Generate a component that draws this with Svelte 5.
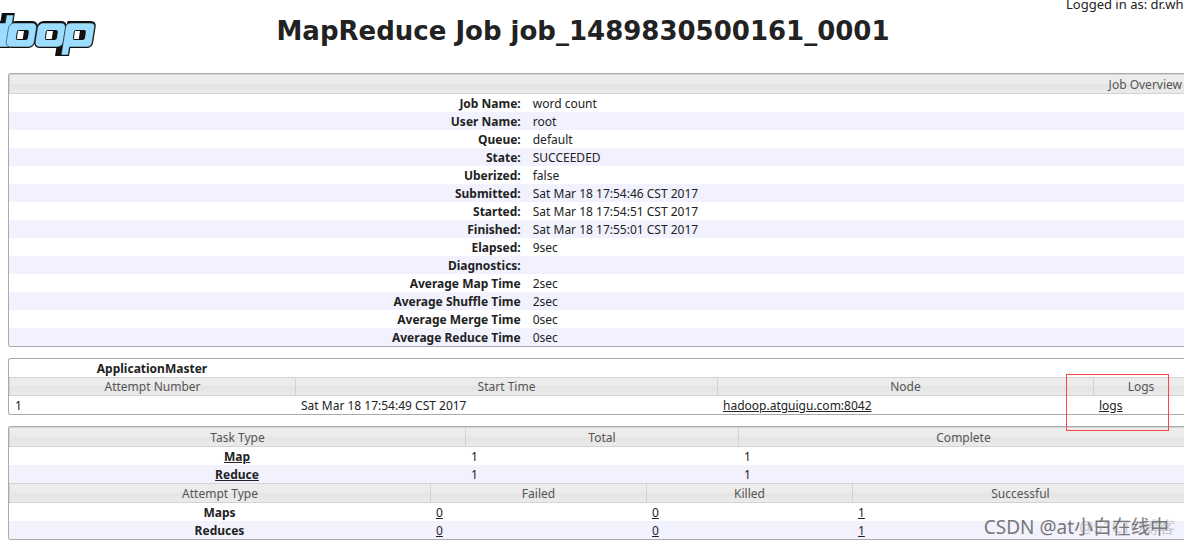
<script>
    const overview = [
        ["Job Name:", "word count"],
        ["User Name:", "root"],
        ["Queue:", "default"],
        ["State:", "SUCCEEDED"],
        ["Uberized:", "false"],
        ["Submitted:", "Sat Mar 18 17:54:46 CST 2017"],
        ["Started:", "Sat Mar 18 17:54:51 CST 2017"],
        ["Finished:", "Sat Mar 18 17:55:01 CST 2017"],
        ["Elapsed:", "9sec"],
        ["Diagnostics:", ""],
        ["Average Map Time", "2sec"],
        ["Average Shuffle Time", "2sec"],
        ["Average Merge Time", "0sec"],
        ["Average Reduce Time", "0sec"]
    ];

    const tasks = [
        { type: "Map", total: 1, complete: 1 },
        { type: "Reduce", total: 1, complete: 1 }
    ];

    const attempts = [
        { type: "Maps", counts: [0, 0, 1] },
        { type: "Reduces", counts: [0, 0, 1] }
    ];

    // relative column widths, the fixed table layout scales them to the panel
    const overview_cols = [516, 659];
    const master_cols = [286, 422, 376, 95];
    const task_cols = [456, 273, 450];
    const attempt_cols = [421, 216, 206, 336];
</script>

{#snippet columns(widths)}
    <colgroup>
        {#each widths as width}
            <col style:width={`${width}px`} />
        {/each}
    </colgroup>
{/snippet}

<div class="page">
    <header>
        <svg class="logo" viewBox="0 0 100 48" role="img" aria-label="hadoop">
            <g transform="translate(2 0) skewX(-9)">
                <g class="shadow">
                    <path d="M1 2H12V35H-6V10H1Z" />
                    <rect x="10" y="10" width="27" height="25" rx="5" />
                    <rect x="38" y="10" width="28" height="25" rx="5" />
                    <path d="M68 10H90Q95 10 95 15V30Q95 35 90 35H73V43H61V35H64Z" />
                </g>
                <g class="face">
                    <path d="M5 3H12V35H-6V11H5Z" />
                    <rect x="9" y="11" width="28" height="24" rx="5" />
                    <rect x="38" y="11" width="28" height="24" rx="5" />
                    <path d="M71 11H90Q95 11 95 15V30Q95 35 90 35H73V43H66V15Q66 11 71 11Z" />
                </g>
                <g class="hole">
                    <rect x="18" y="18" width="12" height="10" rx="2" />
                    <rect x="47" y="18" width="12" height="10" rx="2" />
                    <rect x="75" y="18" width="12" height="10" rx="2" />
                </g>
                <path class="gap" d="M19 19H25V27H19ZM48 19H54V27H48ZM76 19H81V27H76Z" />
            </g>
        </svg>
        <h1>MapReduce Job job_1489830500161_0001</h1>
        <div class="user">Logged in as: dr.who</div>
    </header>

    <main>
        <div class="panel">
            <table class="overview striped">
                {@render columns(overview_cols)}
                <thead>
                    <tr class="bar"><th colspan="2">Job Overview</th></tr>
                </thead>
                <tbody>
                    {#each overview as [name, value]}
                        <tr>
                            <th scope="row">{name}</th>
                            <td>{value}</td>
                        </tr>
                    {/each}
                </tbody>
            </table>
        </div>

        <div class="panel master">
            <table>
                {@render columns(master_cols)}
                <tbody>
                    <tr><th>ApplicationMaster</th><td colspan="3"></td></tr>
                    <tr class="bar">
                        <th>Attempt Number</th>
                        <th>Start Time</th>
                        <th>Node</th>
                        <th>Logs</th>
                    </tr>
                    <tr>
                        <td>1</td>
                        <td>Sat Mar 18 17:54:49 CST 2017</td>
                        <td><a href="#node">hadoop.atguigu.com:8042</a></td>
                        <td class="marked"><a href="#logs">logs</a></td>
                    </tr>
                </tbody>
            </table>
        </div>

        <div class="panel">
            <table class="striped">
                {@render columns(task_cols)}
                <thead>
                    <tr class="bar"><th>Task Type</th><th>Total</th><th>Complete</th></tr>
                </thead>
                <tbody>
                    {#each tasks as task}
                        <tr>
                            <th scope="row"><a href="#{task.type}">{task.type}</a></th>
                            <td>{task.total}</td>
                            <td>{task.complete}</td>
                        </tr>
                    {/each}
                </tbody>
            </table>
            <table class="striped">
                {@render columns(attempt_cols)}
                <thead>
                    <tr class="bar">
                        <th>Attempt Type</th>
                        <th>Failed</th>
                        <th>Killed</th>
                        <th>Successful</th>
                    </tr>
                </thead>
                <tbody>
                    {#each attempts as attempt}
                        <tr>
                            <th scope="row">{attempt.type}</th>
                            {#each attempt.counts as count}
                                <td><a href="#{attempt.type}">{count}</a></td>
                            {/each}
                        </tr>
                    {/each}
                </tbody>
            </table>
        </div>
    </main>

    <div class="watermark under">@51CTO博客</div>
    <div class="watermark">CSDN @at小白在线中</div>
</div>

<style>
    :global(body){
        background: white;
    }

    .page{
        position: relative;
        overflow: hidden;
        padding-bottom: 5px;
        font-family: "Noto Sans", "Noto Sans CJK SC", sans-serif;
        font-size: 12px;
        line-height: 16px;
        color: #222;
    }

    header{
        display: grid;
        grid-template-columns: 100px 1fr 118px;
        height: 73px;
    }

    .logo{
        width: 100px;
        height: 48px;
        margin-top: 12px;
    }

    .shadow{
        fill: #111;
        stroke: #111;
        stroke-width: 2;
    }

    .face{
        fill: #9bdcff;
        stroke: #111;
        stroke-width: 0.5;
    }

    .hole{
        fill: #111;
    }

    .gap{
        fill: white;
    }

    h1{
        margin: 15px 0 0;
        font-family: "DejaVu Sans", Verdana, sans-serif;
        font-size: 26px;
        line-height: 32px;
        text-align: center;
        white-space: nowrap;
    }

    .user{
        margin-top: -4px;
        font-size: 13px;
        white-space: nowrap;
    }

    main{
        display: flex;
        flex-direction: column;
        gap: 11px;
        margin-left: 8px;
    }

    table{
        /* the last column runs on past the window edge */
        width: calc(100% + 4px);
        table-layout: fixed;
        border-collapse: separate;
        border-spacing: 0;
    }

    .panel{
        border: 1px solid #aaa;
        border-right: none;
        border-radius: 3px 0 0 3px;
        overflow: hidden;
    }

    th,
    td{
        box-sizing: border-box;
        height: 18px;
        padding: 2px 6px 0;
        white-space: nowrap;
    }

    td{
        text-align: left;
    }

    .bar th{
        height: 20px;
        border: 1px solid #d3d3d3;
        border-width: 1px 0 1px 1px;
        background: linear-gradient(#ececec 50%, #e4e4e4 50%, #ebebeb);
        font-weight: normal;
        color: #555;
    }

    .overview th{
        text-align: right;
    }

    .master .bar th{
        height: 19px;
        padding-top: 1px;
    }

    .striped tbody tr:nth-child(even){
        background: #f2f2ff;
    }

    a{
        color: inherit;
    }

    .marked{
        position: relative;
    }

    .marked::after{
        content: "";
        position: absolute;
        top: -22px;
        left: -27px;
        width: 101px;
        height: 55px;
        border: 1px solid #f44;
    }

    .master{
        overflow: visible;
    }

    .watermark{
        position: absolute;
        right: 15px;
        bottom: 6px;
        font-size: 19px;
        line-height: 24px;
        color: #777;
    }

    .under{
        right: 9px;
        font-size: 16px;
        color: #c8c8c8;
    }
</style>
